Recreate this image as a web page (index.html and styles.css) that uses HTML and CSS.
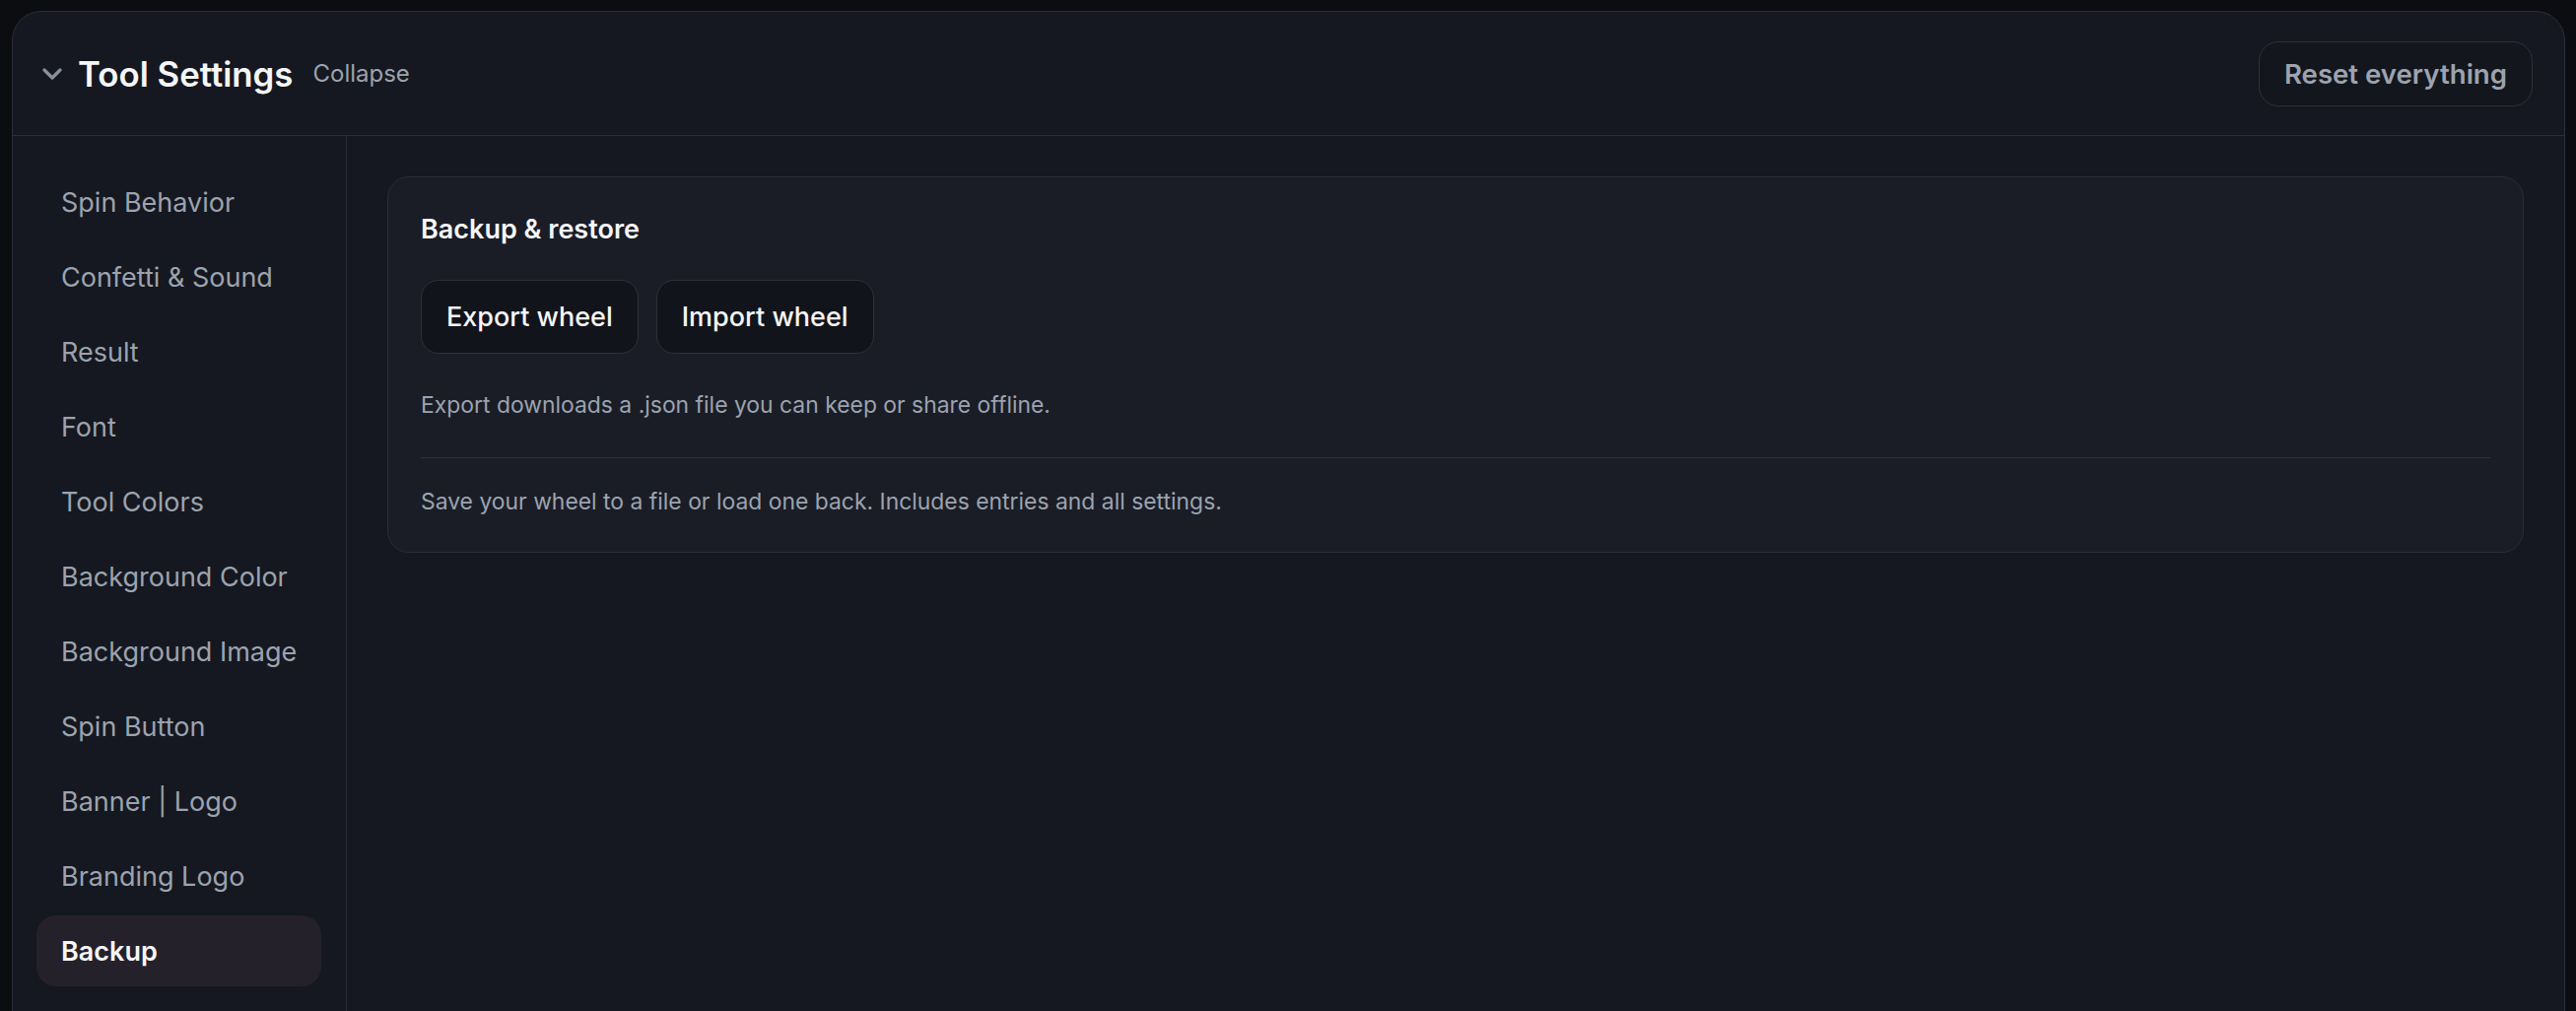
FILE: index.html
```html
<!DOCTYPE html>
<html lang="en">
    <head>
        <meta charset="UTF-8" />
        <meta name="viewport" content="width=device-width, initial-scale=1.0" />
        <title>Tool Settings</title>
        <link rel="stylesheet" href="styles.css">
    </head>

    <body>
        <div class="settings">
            <div class="settings-header">
                <div class="header-left">
                    <svg class="chevron" width="20" height="12" viewBox="0 0 20 12">
                        <path d="M2 2 L10 10 L18 2" fill="none" stroke="#8a8f9a" stroke-width="3.2" stroke-linecap="round" stroke-linejoin="round" />
                    </svg>
                    <h1 class="title">Tool Settings</h1>
                    <span class="collapse">Collapse</span>
                </div>
                <button class="reset">Reset everything</button>
            </div>

            <div class="settings-body">
                <ul class="sidebar">
                    <li>Spin Behavior</li>
                    <li>Confetti &amp; Sound</li>
                    <li>Result</li>
                    <li>Font</li>
                    <li>Tool Colors</li>
                    <li>Background Color</li>
                    <li>Background Image</li>
                    <li>Spin Button</li>
                    <li>Banner | Logo</li>
                    <li>Branding Logo</li>
                    <li class="current">Backup</li>
                </ul>

                <div class="main">
                    <div class="card">
                        <div class="card-title">Backup &amp; restore</div>
                        <div class="actions">
                            <button class="btn">Export wheel</button>
                            <button class="btn">Import wheel</button>
                        </div>
                        <p class="hint">Export downloads a .json file you can keep or share offline.</p>
                        <div class="divider"></div>
                        <p class="hint">Save your wheel to a file or load one back. Includes entries and all settings.</p>
                    </div>
                </div>
            </div>
        </div>
    </body>
</html>
```

FILE: styles.css
```css
* {
    padding: 0;
    margin: 0;
    box-sizing: border-box;
}

html,
body {
    height: 100%;
    overflow: hidden;
}

body {
    background-color: #0b0d11;
    font-family: Inter, "Noto Sans", sans-serif;
    color: #f3f4f6;
}

.settings {
    margin: 11px 11px 0 12px;
    border: 1px solid #2a2e38;
    border-radius: 30px 30px 0 0;
    background-color: #151820;
    min-height: 1100px;
}

.settings-header {
    display: flex;
    align-items: center;
    justify-content: space-between;
    height: 126px;
    padding: 0 32px 0 30px;
    border-bottom: 1px solid #2a2e38;
}

.header-left {
    display: flex;
    align-items: center;
}

.chevron {
    margin-right: 16px;
}

.title {
    font-size: 34.8px;
    font-weight: 600;
    color: #f5f6f8;
}

.collapse {
    margin-left: 20px;
    font-size: 24px;
    color: #9ca3af;
}

.reset {
    height: 66px;
    padding: 0 25px;
    border: 1px solid #2d313b;
    border-radius: 20px;
    background-color: #13161d;
    color: #9ca3af;
    font-family: inherit;
    font-size: 27.6px;
    font-weight: 600;
}

.settings-body {
    display: grid;
    grid-template-columns: 339px 1fr;
}

.sidebar {
    list-style: none;
    padding: 31px 25px 32px 24px;
    border-right: 1px solid #2a2e38;
    display: flex;
    flex-direction: column;
    gap: 4px;
}

.sidebar li {
    display: flex;
    align-items: center;
    height: 72px;
    padding: 0 25px;
    border-radius: 20px;
    font-size: 27px;
    white-space: nowrap;
    color: #9ca3af;
}

.sidebar .current {
    background-color: #25212a;
    color: #f5f6f8;
    font-weight: 600;
}

.main {
    padding: 41px;
}

.card {
    padding: 33px;
    border: 1px solid #2a2d38;
    border-radius: 22px;
    background-color: #1a1d26;
}

.card-title {
    font-size: 27px;
    font-weight: 600;
    line-height: 40px;
    color: #f5f6f8;
}

.actions {
    display: flex;
    gap: 18px;
    margin: 31px 0 35px;
}

.btn {
    height: 75px;
    padding: 0 25px;
    border: 1px solid #2d313b;
    border-radius: 18px;
    background-color: #12141b;
    color: #f5f6f8;
    font-family: inherit;
    font-size: 27px;
    font-weight: 500;
}

.hint {
    font-size: 22.9px;
    line-height: 35px;
    color: #9ca3af;
}

.divider {
    height: 1px;
    margin: 35px 0 27px;
    background-color: #2c303a;
}
```
